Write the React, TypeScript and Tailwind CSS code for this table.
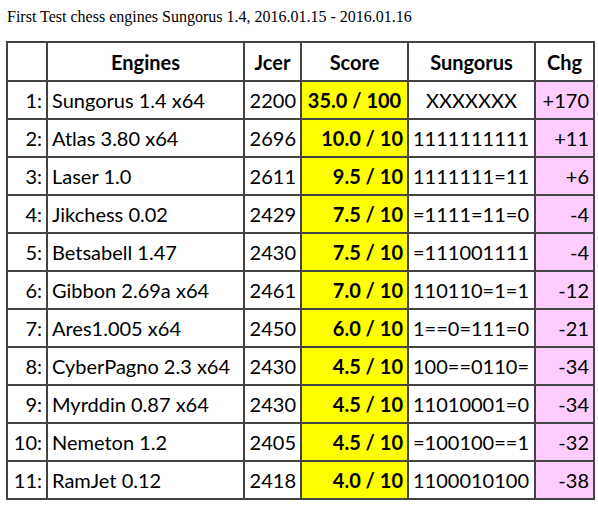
import React from "react";

interface Row {
  rank: string;
  engine: string;
  jcer: string;
  score: string;
  games: string;
  chg: string;
}

const rows: Row[] = [
  { rank: "1:", engine: "Sungorus 1.4 x64", jcer: "2200", score: "35.0 / 100", games: "XXXXXXX", chg: "+170" },
  { rank: "2:", engine: "Atlas 3.80 x64", jcer: "2696", score: "10.0 / 10", games: "1111111111", chg: "+11" },
  { rank: "3:", engine: "Laser 1.0", jcer: "2611", score: "9.5 / 10", games: "1111111=11", chg: "+6" },
  { rank: "4:", engine: "Jikchess 0.02", jcer: "2429", score: "7.5 / 10", games: "=1111=11=0", chg: "-4" },
  { rank: "5:", engine: "Betsabell 1.47", jcer: "2430", score: "7.5 / 10", games: "=111001111", chg: "-4" },
  { rank: "6:", engine: "Gibbon 2.69a x64", jcer: "2461", score: "7.0 / 10", games: "110110=1=1", chg: "-12" },
  { rank: "7:", engine: "Ares1.005 x64", jcer: "2450", score: "6.0 / 10", games: "1==0=111=0", chg: "-21" },
  { rank: "8:", engine: "CyberPagno 2.3 x64", jcer: "2430", score: "4.5 / 10", games: "100==0110=", chg: "-34" },
  { rank: "9:", engine: "Myrddin 0.87 x64", jcer: "2430", score: "4.5 / 10", games: "11010001=0", chg: "-34" },
  { rank: "10:", engine: "Nemeton 1.2", jcer: "2405", score: "4.5 / 10", games: "=100100==1", chg: "-32" },
  { rank: "11:", engine: "RamJet 0.12", jcer: "2418", score: "4.0 / 10", games: "1100010100", chg: "-38" },
];

const cell = "border-2 border-[#444] px-[4px] h-[38px] whitespace-nowrap";

export default function App() {
  return (
    <div className="bg-white w-[598px] h-[512px] pl-[6px] pt-[7px] text-black">
      <div className="font-['Liberation_Serif',serif] text-[16px] leading-[20px] pl-[1px]">
        First Test chess engines Sungorus 1.4, 2016.01.15 - 2016.01.16
      </div>
      <table className="mt-[14px] border-collapse table-fixed w-[587px] font-['Lato',sans-serif] text-[20px]">
        <colgroup>
          <col className="w-[40px]" />
          <col className="w-[197px]" />
          <col className="w-[57px]" />
          <col className="w-[107px]" />
          <col className="w-[127px]" />
          <col className="w-[59px]" />
        </colgroup>
        <thead>
          <tr className="font-bold text-center">
            <th className={`${cell} h-[39px]`}></th>
            <th className={cell}>Engines</th>
            <th className={cell}>Jcer</th>
            <th className={cell}>Score</th>
            <th className={cell}>Sungorus</th>
            <th className={cell}>Chg</th>
          </tr>
        </thead>
        <tbody>
          {rows.map((r, i) => (
            <tr key={r.rank}>
              <td className={`${cell} text-right`}>{r.rank}</td>
              <td className={`${cell} text-left`}>{r.engine}</td>
              <td className={`${cell} text-right`}>{r.jcer}</td>
              <td className={`${cell} bg-[#ffff00] font-bold ${i === 0 ? "text-center" : "text-right"}`}>{r.score}</td>
              <td className={`${cell} ${i === 0 ? "text-center" : "text-left"}`}>{r.games}</td>
              <td className={`${cell} bg-[#ffccff] text-right`}>{r.chg}</td>
            </tr>
          ))}
        </tbody>
      </table>
    </div>
  );
}
